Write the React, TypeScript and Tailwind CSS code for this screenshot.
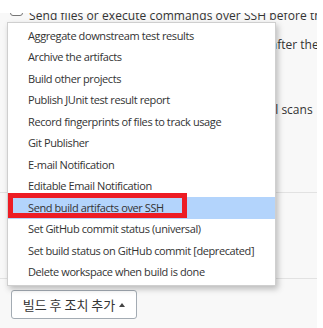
const menuItems = [
  "Aggregate downstream test results",
  "Archive the artifacts",
  "Build other projects",
  "Publish JUnit test result report",
  "Record fingerprints of files to track usage",
  "Git Publisher",
  "E-mail Notification",
  "Editable Email Notification",
  "Send build artifacts over SSH",
  "Set GitHub commit status (universal)",
  "Set build status on GitHub commit [deprecated]",
  "Delete workspace when build is done",
]

const selected = "Send build artifacts over SSH"

export default function App() {
  return (
    <div className="relative flex h-[328px] w-[323px] flex-col overflow-hidden bg-white font-['Open_Sans',sans-serif] text-[#333]">
      <div className="h-[13px] shrink-0 bg-white" />
      <div className="flex flex-1 flex-col overflow-hidden">
        <div className="flex w-[317px] flex-1 flex-col overflow-hidden bg-[#f8f8f8] text-[12px]">
          <label className="mt-[-7px] flex h-[20px] items-start gap-[6px] whitespace-nowrap pl-[10px] leading-[20px] tracking-[0.07px]">
            <span className="mt-[-3px] h-[13px] w-[13px] shrink-0 rounded-[3px] border border-[#767676] bg-white" />
            Send files or execute commands over SSH before the build starts
          </label>
          <label className="mt-[9px] flex h-[20px] items-center gap-[6px] whitespace-nowrap pl-[14px]">
            <span className="h-[13px] w-[13px] shrink-0 rounded-[3px] border border-[#767676] bg-white" />
            Send files or execute commands over SSH after the build runs
          </label>
          <p className="mt-[45px] h-[20px] whitespace-nowrap pl-[33px] leading-[20px]">
            Enable static code analysis with incremental scans
          </p>
          <div className="mt-[72px] h-[86px] border-t border-[#e2e2e2]" />
          <div className="border-t border-[#e2e2e2]">
            <button
              type="button"
              className="ml-[11px] mt-[11px] flex h-[29px] w-[126px] items-center justify-center gap-[4px] rounded-[3px] border border-[#a3abb3] bg-white font-['Noto_Sans_CJK_KR',sans-serif] text-[13px] text-[#333]"
            >
              빌드 후 조치 추가
              <span className="h-0 w-0 border-x-[3.5px] border-b-[4px] border-x-transparent border-b-[#444]" />
            </button>
          </div>
        </div>
      </div>

      <ul className="absolute left-[7px] top-[22px] w-[269px] border border-[#cfcfcf] bg-white py-[2px] shadow-[2px_3px_6px_rgba(0,0,0,0.25)]">
        {menuItems.map((item) => (
          <li
            key={item}
            className={`flex h-[21.5px] items-center whitespace-nowrap pl-[20px] text-[11px] tracking-[-0.4px] ${
              item === selected ? "bg-[#b3d4fc]" : ""
            }`}
          >
            {item}
          </li>
        ))}
      </ul>

      <div className="absolute left-[8px] top-[193px] h-[25px] w-[179px] border-[5px] border-[#ed1c24]" />
    </div>
  )
}
